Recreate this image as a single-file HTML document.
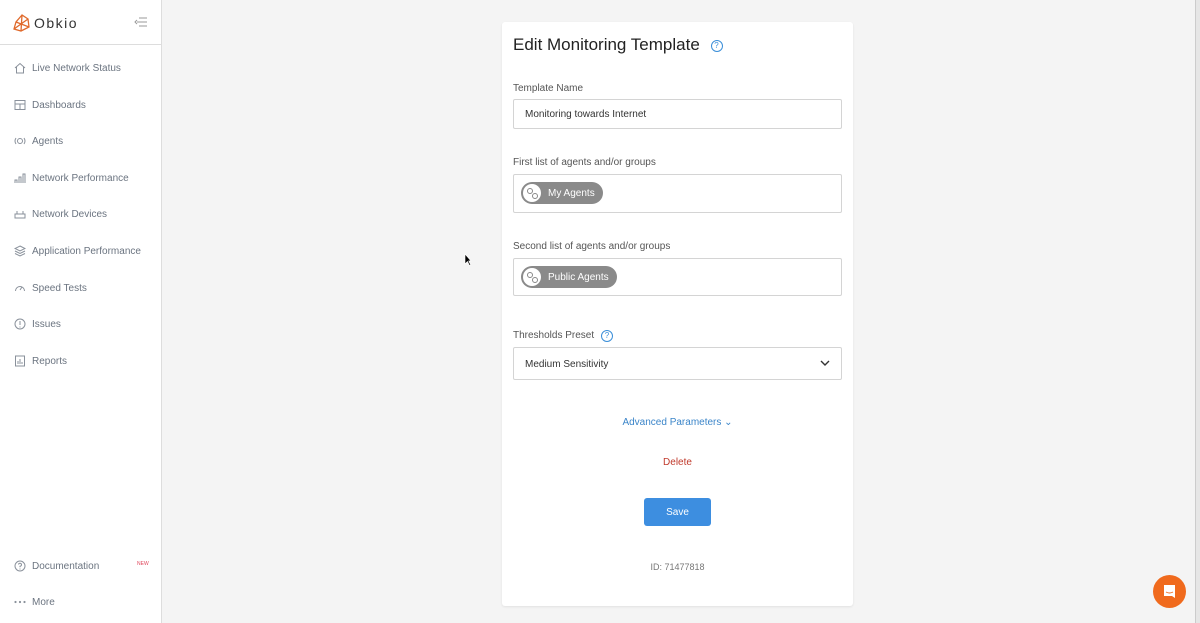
<!DOCTYPE html>
<html><head><meta charset="utf-8"><style>
*{box-sizing:border-box;margin:0;padding:0}
body{width:1200px;height:623px;overflow:hidden;background:#f4f4f4;font-family:"Liberation Sans",sans-serif;position:relative}
.side{position:absolute;left:0;top:0;width:162px;height:623px;background:#fff;border-right:1px solid #ddd}
.logo{height:45px;border-bottom:1px solid #ddd;position:relative}
.logo span{position:absolute;left:34px;top:15px;font-size:14px;letter-spacing:1.5px;color:#333}
.nav{position:absolute;left:14px;font-size:10px;color:#6b7480;display:flex;align-items:center}
.nav svg{width:12px;height:12px;margin-right:6px}
.card{position:absolute;left:502px;top:22px;width:351px;height:584px;background:#fff;border-radius:3px;box-shadow:0 1px 2px rgba(0,0,0,.08)}
h1{position:absolute;left:11px;top:13px;font-size:17px;font-weight:normal;color:#222}
.lbl{position:absolute;left:11px;font-size:10px;color:#555}
.box{position:absolute;left:11px;width:329px;border:1px solid #d4d4d4;border-radius:2px;font-size:10px;color:#333}
.chip{position:absolute;left:7px;top:7px;height:22px;border-radius:11px;background:#8a8a8a;color:#fff;font-size:10px;display:flex;align-items:center;padding:0 8px 0 27px}
.chip i{position:absolute;left:2px;top:2px;width:18px;height:18px;border-radius:50%;background:#fff}
.chip i:before,.chip i:after{content:"";position:absolute;width:4px;height:4px;border:1px solid #888;border-radius:50%}
.chip i:before{left:4px;top:4px}.chip i:after{left:9px;top:9px}
.q{display:inline-block;width:12px;height:12px;border:1.2px solid #3b8fd9;border-radius:50%;color:#3b8fd9;font-size:8px;text-align:center;line-height:10px}
</style></head><body>
<div class="side">
<div class="logo">
<svg style="position:absolute;left:13px;top:14px" width="18" height="18" viewBox="0 0 18 18" fill="none" stroke="#e06a2c" stroke-width="1.3"><path d="M9 1L3 8 1 15 8 17 16 13 15 5z M9 1L8 17 M3 8L16 13 M1 15L15 5"/></svg>
<span>Obkio</span>
<svg style="position:absolute;left:134px;top:17px" width="14" height="10" viewBox="0 0 14 10" stroke="#999" fill="none"><path d="M5 1h8M3 5h10M5 9h8M3 3L1 5l2 2"/></svg>
</div>
<div class="nav" style="top:62px"><svg viewBox="0 0 12 12" fill="none" stroke="#8a919b"><path d="M1 6L6 1.5 11 6M2.5 5v6h7V5"/></svg>Live Network Status</div>
<div class="nav" style="top:99px"><svg viewBox="0 0 12 12" fill="none" stroke="#8a919b"><rect x="1" y="1.5" width="10" height="9"/><path d="M1 5h10M6 5v5.5"/></svg>Dashboards</div>
<div class="nav" style="top:135px"><svg viewBox="0 0 12 12" fill="none" stroke="#8a919b"><circle cx="6" cy="6" r="2.5"/><path d="M2 3Q0 6 2 9M10 3Q12 6 10 9"/></svg>Agents</div>
<div class="nav" style="top:172px"><svg viewBox="0 0 12 12" fill="none" stroke="#8a919b"><path d="M1 11V8h2v3M5 11V5h2v6M9 11V2h2v9"/></svg>Network Performance</div>
<div class="nav" style="top:208px"><svg viewBox="0 0 12 12" fill="none" stroke="#8a919b"><rect x="1" y="6" width="10" height="4"/><path d="M3 6V3M9 6V3"/></svg>Network Devices</div>
<div class="nav" style="top:245px"><svg viewBox="0 0 12 12" fill="none" stroke="#8a919b"><path d="M6 1L11 3.5 6 6 1 3.5z M1 6L6 8.5 11 6M1 8.5L6 11 11 8.5"/></svg>Application Performance</div>
<div class="nav" style="top:282px"><svg viewBox="0 0 12 12" fill="none" stroke="#8a919b"><path d="M1.5 9A4.5 4.5 0 1 1 10.5 9M6 8l2-3"/></svg>Speed Tests</div>
<div class="nav" style="top:318px"><svg viewBox="0 0 12 12" fill="none" stroke="#8a919b"><circle cx="6" cy="6" r="5"/><path d="M6 3v4M6 8.5v1"/></svg>Issues</div>
<div class="nav" style="top:355px"><svg viewBox="0 0 12 12" fill="none" stroke="#8a919b"><rect x="1.5" y="1" width="9" height="10"/><path d="M4 9V6M6 9V4M8 9V7"/></svg>Reports</div>
<div class="nav" style="top:560px"><svg viewBox="0 0 12 12" fill="none" stroke="#8a919b"><circle cx="6" cy="6" r="5"/><path d="M4.5 4.5a1.5 1.5 0 1 1 1.5 1.7v1M6 8.5v1"/></svg>Documentation</div>
<div style="position:absolute;left:137px;top:561px;font-size:5px;color:#e0455a">NEW</div>
<div class="nav" style="top:596px"><svg viewBox="0 0 12 12" fill="#8a919b"><circle cx="1.5" cy="6" r="1.1"/><circle cx="6" cy="6" r="1.1"/><circle cx="10.5" cy="6" r="1.1"/></svg>More</div>
</div>
<div class="card">
<h1>Edit Monitoring Template <span class="q" style="margin-left:6px;vertical-align:2px">?</span></h1>
<div class="lbl" style="top:61px">Template Name</div>
<div class="box" style="top:77px;height:30px;padding:9px 11px">Monitoring towards Internet</div>
<div class="lbl" style="top:135px">First list of agents and/or groups</div>
<div class="box" style="top:152px;height:39px"><div class="chip"><i></i>My Agents</div></div>
<div class="lbl" style="top:219px">Second list of agents and/or groups</div>
<div class="box" style="top:236px;height:38px"><div class="chip"><i></i>Public Agents</div></div>
<div class="lbl" style="top:308px">Thresholds Preset <span class="q" style="margin-left:4px">?</span></div>
<div class="box" style="top:325px;height:33px;padding:11px 11px">Medium Sensitivity
<svg style="position:absolute;right:11px;top:12px" width="10" height="7" viewBox="0 0 10 7" fill="none" stroke="#333" stroke-width="1.4"><path d="M1 1l4 4 4-4"/></svg></div>
<div style="position:absolute;left:0;width:351px;top:395px;text-align:center;font-size:10px;color:#3b85c9">Advanced Parameters ⌄</div>
<div style="position:absolute;left:0;width:351px;top:435px;text-align:center;font-size:10px;color:#c0392b">Delete</div>
<div style="position:absolute;left:142px;top:476px;width:67px;height:28px;background:#3d8ee0;border-radius:3px;color:#fff;font-size:10px;text-align:center;line-height:30px">Save</div>
<div style="position:absolute;left:0;width:351px;top:540px;text-align:center;font-size:9px;color:#777">ID: 71477818</div>
</div>
<div style="position:absolute;left:1195px;top:0;width:5px;height:623px;background:#e6e6e6;border-left:1px solid #ccc"></div>
<div style="position:absolute;left:1153px;top:575px;width:33px;height:33px;border-radius:50%;background:#f06a1d">
<svg style="position:absolute;left:10px;top:9px" width="13" height="15" viewBox="0 0 13 15"><path d="M1 1h11v13l-3-2H1z" fill="#fff"/><path d="M3 8q3.5 2 7 0" stroke="#f06a1d" fill="none"/></svg></div>
<svg style="position:absolute;left:464px;top:253px" width="8" height="13" viewBox="0 0 8 13"><path d="M1 1v10l2.5-2.5 2 4 1.2-.6-2-4H7z" fill="#000" stroke="#fff" stroke-width=".6"/></svg>
</body></html>
